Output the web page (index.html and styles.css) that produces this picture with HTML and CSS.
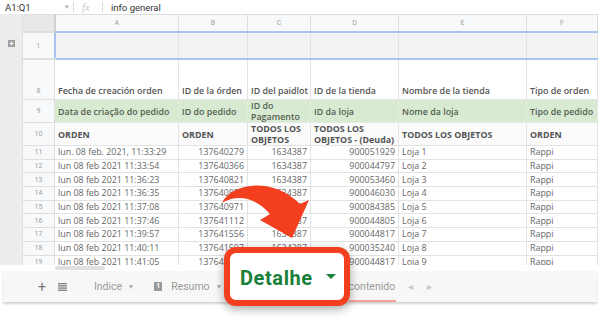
FILE: index.html
```html
<!DOCTYPE html>
<html>
<head>
  <title>Detalhe</title>
  <link rel="stylesheet" href="styles.css">
</head>
<body>
  <div class="formula">
    <span class="range">A1:Q1</span>
    <span class="caret">&#9662;</span>
    <span class="sep"></span>
    <span class="fx">fx</span>
    <span class="sep"></span>
    <span class="value">info general</span>
  </div>

  <div class="sheet">
    <div class="gutter">
      <div class="corner"></div>
      <div class="plus">+</div>
    </div>
    <table class="grid">
      <colgroup>
        <col class="c-num"><col class="c-a"><col class="c-b"><col class="c-c"><col class="c-d"><col class="c-e"><col class="c-f">
      </colgroup>
      <tr class="letters">
        <td class="num head"></td><td>A</td><td>B</td><td>C</td><td>D</td><td>E</td><td>F</td>
      </tr>
      <tr class="r1">
        <td class="num">1</td><td></td><td></td><td></td><td></td><td></td><td></td>
      </tr>
      <tr class="r8">
        <td class="num">8</td>
        <td>Fecha de creación orden</td>
        <td>ID de la órden</td>
        <td>ID del paidlot</td>
        <td>ID de la tienda</td>
        <td>Nombre de la tienda</td>
        <td>Tipo de orden</td>
      </tr>
      <tr class="r9">
        <td class="num">9</td>
        <td>Data de criação do pedido</td>
        <td>ID do pedido</td>
        <td>ID do Pagamento</td>
        <td>ID da loja</td>
        <td>Nome da loja</td>
        <td>Tipo de pedido</td>
      </tr>
      <tr class="r10">
        <td class="num">10</td>
        <td>ORDEN</td>
        <td>ORDEN</td>
        <td>TODOS LOS OBJETOS</td>
        <td>TODOS LOS OBJETOS - (Deuda)</td>
        <td>TODOS LOS OBJETOS</td>
        <td>ORDEN</td>
      </tr>
      <tr class="row"><td class="num">11</td><td>lun. 08 feb. 2021, 11:33:29</td><td class="n">137640279</td><td class="n">1634387</td><td class="n">900051929</td><td>Loja 1</td><td>Rappi</td></tr>
      <tr class="row"><td class="num">12</td><td>lun 08 feb 2021 11:33:54</td><td class="n">137640366</td><td class="n">1634387</td><td class="n">900044797</td><td>Loja 2</td><td>Rappi</td></tr>
      <tr class="row"><td class="num">13</td><td>lun 08 feb 2021 11:36:23</td><td class="n">137640821</td><td class="n">1634387</td><td class="n">900053460</td><td>Loja 3</td><td>Rappi</td></tr>
      <tr class="row"><td class="num">14</td><td>lun 08 feb 2021 11:36:35</td><td class="n">137640857</td><td class="n">1634387</td><td class="n">900046030</td><td>Loja 4</td><td>Rappi</td></tr>
      <tr class="row"><td class="num">15</td><td>lun 08 feb 2021 11:37:08</td><td class="n">137640971</td><td class="n">1634387</td><td class="n">900084385</td><td>Loja 5</td><td>Rappi</td></tr>
      <tr class="row"><td class="num">16</td><td>lun 08 feb 2021 11:37:46</td><td class="n">137641112</td><td class="n">1634387</td><td class="n">900044805</td><td>Loja 6</td><td>Rappi</td></tr>
      <tr class="row"><td class="num">17</td><td>lun 08 feb 2021 11:39:57</td><td class="n">137641556</td><td class="n">1634387</td><td class="n">900044817</td><td>Loja 7</td><td>Rappi</td></tr>
      <tr class="row"><td class="num">18</td><td>lun 08 feb 2021 11:40:11</td><td class="n">137641597</td><td class="n">1634387</td><td class="n">900035240</td><td>Loja 8</td><td>Rappi</td></tr>
      <tr class="row"><td class="num">19</td><td>lun 08 feb 2021 11:41:05</td><td class="n">137641640</td><td class="n">1634387</td><td class="n">900044817</td><td>Loja 9</td><td>Rappi</td></tr>
    </table>
  </div>

  <div class="scroll"><span class="thumb"></span></div>

  <div class="tabs">
    <span class="add">+</span>
    <svg class="list" width="9" height="8" viewBox="0 0 9 8"><rect y="0" width="9" height="1.4" fill="#888"/><rect y="2.2" width="9" height="1.4" fill="#888"/><rect y="4.4" width="9" height="1.4" fill="#888"/><rect y="6.6" width="9" height="1.4" fill="#888"/></svg>
    <span class="tab">Indice <i>&#9662;</i></span>
    <span class="tab"><b class="badge">1</b>Resumo <i>&#9662;</i></span>
    <span class="tab hidden">Detalhe <i>&#9662;</i></span>
    <span class="tab active">contenido</span>
    <span class="nav">&#9666;</span>
    <span class="nav">&#9656;</span>
  </div>

  <svg class="arrow" width="600" height="325" viewBox="0 0 600 325">
    <path d="M222 203 C231 183 273 176 300 204 L309 200 L292 238 L260 220 L270 214 C255 197 237 194 222 203 Z" fill="#f43f1f"/>
  </svg>

  <div class="callout">
    <span>Detalhe</span>
    <i class="tri"></i>
  </div>
</body>
</html>
```

FILE: styles.css
```css
body {
  margin: 0;
  width: 600px;
  height: 325px;
  overflow: hidden;
  background: #ffffff;
  font-family: "Open Sans", sans-serif;
  position: relative;
}

.formula {
  height: 14px;
  display: flex;
  align-items: center;
  font-family: Roboto, sans-serif;
  font-size: 9.5px;
  color: #333;
}

.range {
  margin-left: 5px;
  width: 60px;
}

.caret {
  font-size: 7px;
  color: #aaa;
  width: 8px;
}

.sep {
  width: 1px;
  height: 10px;
  background: #ddd;
  margin: 0 8px 0 0;
}

.fx {
  font-family: "Liberation Serif", serif;
  font-style: italic;
  color: #c8c8c8;
  font-size: 11px;
  width: 20px;
}

.sheet {
  display: flex;
  height: 251px;
  overflow: hidden;
}

.gutter {
  width: 22px;
  flex: none;
  background: #ececec;
}

.corner {
  height: 17px;
}

.plus {
  margin: 9px 0 0 8px;
  width: 7px;
  height: 7px;
  background: #9e9e9e;
  color: #fff;
  font: bold 8px/7px Roboto, sans-serif;
  text-align: center;
}

.grid {
  border-collapse: collapse;
  table-layout: fixed;
  width: 575px;
  font-size: 8.9px;
  color: #666;
}

.c-num { width: 32px; }
.c-a { width: 124px; }
.c-b { width: 69px; }
.c-c { width: 63px; }
.c-d { width: 88px; }
.c-e { width: 128px; }
.c-f { width: 71px; }

.grid td {
  border: 1px solid #e3e3e3;
  padding: 0 3px;
  white-space: nowrap;
  overflow: hidden;
  line-height: 12px;
}

.grid td.num {
  background: #f8f9fa;
  color: #a0a0a0;
  font-family: Roboto, sans-serif;
  font-size: 7px;
  text-align: center;
  border-color: #dedede;
}

.letters td {
  height: 16px;
  background: #f8f9fa;
  color: #a0a0a0;
  font-family: Roboto, sans-serif;
  font-size: 7px;
  text-align: center;
  border-color: #dedede;
}

.letters td.head {
  background: #e8e8e8;
  border-right: 2px solid #d0d0d0;
}

.r1 td {
  height: 25px;
  background: #f3f3f3;
  border-top: 2px solid #a8c4f2;
  border-bottom: 2px solid #a8c4f2;
}

.r1 td.num {
  background: #f8f9fa;
  border-top-color: #dedede;
  border-bottom-color: #dedede;
}

.r1 td:nth-child(2) {
  border-left: 2px solid #a8c4f2;
}

.r8 td {
  height: 37px;
  vertical-align: bottom;
  padding-bottom: 2px;
  font-weight: 600;
  color: #555;
}

.r9 td {
  height: 22px;
  line-height: 11px;
  background: #d9ead3;
  font-weight: 600;
  color: #556052;
  white-space: normal;
  border-color: #e3ece0;
}

.r10 td {
  height: 22px;
  line-height: 11px;
  font-weight: 700;
  color: #555;
  white-space: normal;
  background: #fbfbfb;
}

.r10 td.num, .r9 td.num, .r8 td.num {
  font-weight: 400;
  white-space: nowrap;
}

.row td {
  height: 12.7px;
  line-height: 12px;
}

.row td.n {
  text-align: right;
}

.scroll {
  height: 6px;
  position: relative;
}

.thumb {
  position: absolute;
  left: 55px;
  top: 1px;
  width: 50px;
  height: 4px;
  background: #e0e0e0;
  border-radius: 2px;
}

.tabs {
  margin: 0 3px;
  height: 31px;
  background: #f7f7f7;
  box-shadow: 0 2px 2px rgba(0, 0, 0, 0.18);
  display: flex;
  align-items: center;
  font-family: Roboto, sans-serif;
  font-size: 10.5px;
  color: #9a9a9a;
}

.add {
  margin-left: 35px;
  font-size: 14px;
  color: #777;
}

.list {
  margin-left: 12px;
}

.tab {
  margin-left: 27px;
  display: flex;
  align-items: center;
}

.tab i {
  font-style: normal;
  font-size: 8px;
  margin-left: 7px;
  color: #aaa;
}

.badge {
  width: 8px;
  height: 9px;
  background: #9a9a9a;
  color: #fff;
  font-size: 7px;
  line-height: 9px;
  text-align: center;
  margin-right: 9px;
}

.tab + .tab {
  margin-left: 21px;
}

.tab.hidden {
  width: 100px;
  margin-left: 12px;
  visibility: hidden;
}

.tab.active {
  margin-left: 16px;
  height: 31px;
  box-sizing: border-box;
  padding-top: 2px;
  border-bottom: 2px solid #f4a396;
  width: 47px;
  overflow: hidden;
}

.nav {
  margin-left: 12px;
  color: #c8c8c8;
  font-size: 10px;
}

.nav + .nav {
  margin-left: 14px;
}

.arrow {
  position: absolute;
  left: 0;
  top: 0;
}

.callout {
  position: absolute;
  left: 224px;
  top: 247px;
  width: 114px;
  height: 47px;
  border: 6px solid #f43f1f;
  border-radius: 12px;
  background: #fff;
  box-shadow: 0 3px 10px rgba(0, 0, 0, 0.35);
  display: flex;
  align-items: center;
  font-family: Roboto, sans-serif;
  font-weight: 700;
  font-size: 20px;
  letter-spacing: 0.6px;
  color: #188038;
}

.callout span {
  margin-left: 10px;
  margin-top: 2px;
}

.tri {
  margin-left: 13px;
  width: 0;
  height: 0;
  border-left: 5px solid transparent;
  border-right: 5px solid transparent;
  border-top: 5px solid #188038;
}
```
